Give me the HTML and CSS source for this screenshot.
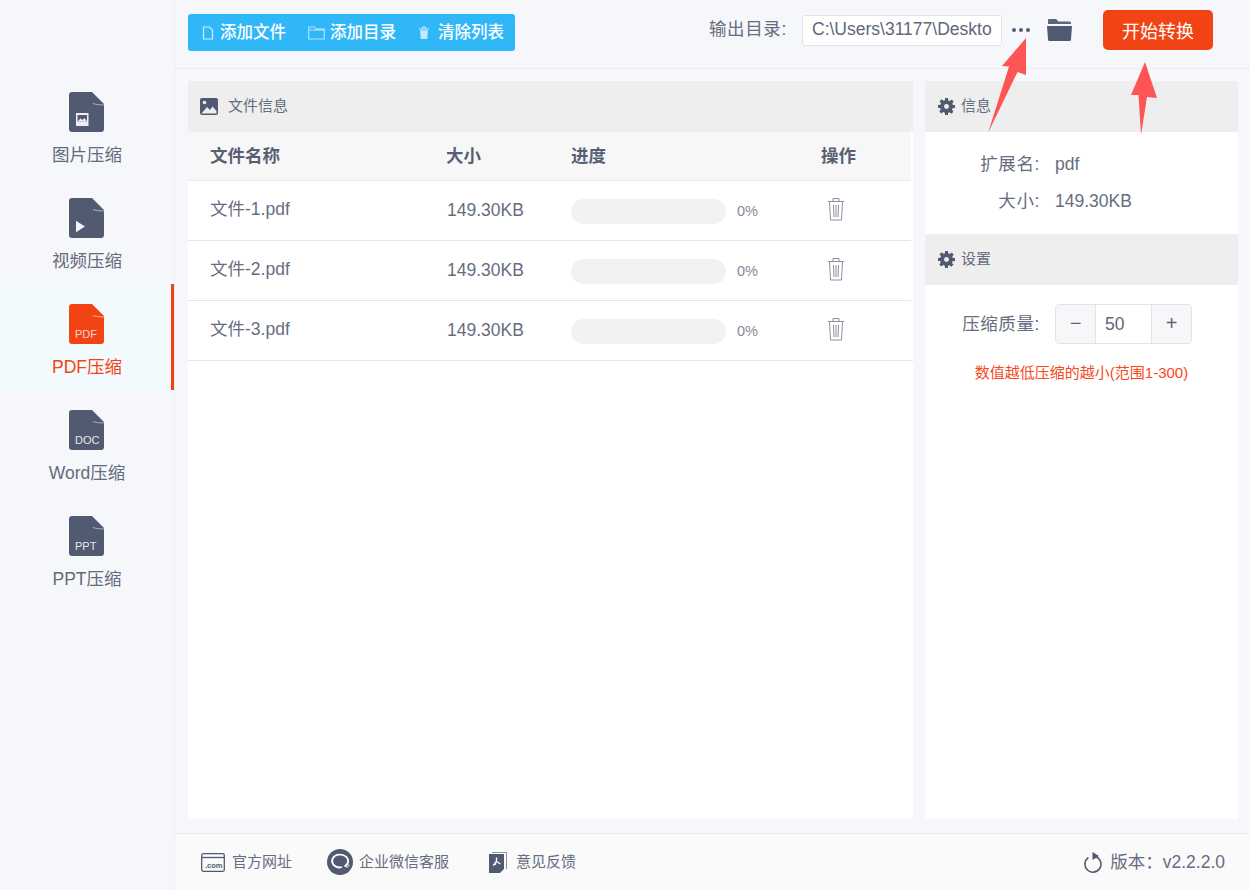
FILE: index.html
```html
<!DOCTYPE html>
<html lang="zh-CN">
<head>
<meta charset="utf-8">
<title>PDF压缩</title>
<link rel="stylesheet" href="styles.css">
</head>
<body>
<div class="app">
  <aside class="sidebar">
    <div class="nav-item">
      <svg class="file-icon" viewBox="0 0 35 40"><path class="f" d="M3 0H23L35 12V37a3 3 0 0 1-3 3H3a3 3 0 0 1-3-3V3a3 3 0 0 1 3-3Z"/><path class="fold" d="M24 11.500q3 1.500 11 1.500" /><rect x="7" y="21" width="12.500" height="13" fill="#eef0f4"/><rect x="8.500" y="23" width="9.500" height="6.500" fill="#525a72"/><path d="M8.500 29.500l3-3 2 1.500 2-2 2.500 3.500Z" fill="#eef0f4"/></svg>
      <span>图片压缩</span>
    </div>
    <div class="nav-item">
      <svg class="file-icon" viewBox="0 0 35 40"><path class="f" d="M3 0H23L35 12V37a3 3 0 0 1-3 3H3a3 3 0 0 1-3-3V3a3 3 0 0 1 3-3Z"/><path class="fold" d="M24 11.500q3 1.500 11 1.500"/><path d="M7 22.700l9 5.800-9 5.800Z" fill="#f3f5f8"/></svg>
      <span>视频压缩</span>
    </div>
    <div class="nav-item active">
      <svg class="file-icon" viewBox="0 0 35 40"><path class="f" d="M3 0H23L35 12V37a3 3 0 0 1-3 3H3a3 3 0 0 1-3-3V3a3 3 0 0 1 3-3Z"/><path class="fold" d="M24 11.500q3 1.500 11 1.500"/><text x="6" y="34" class="ft">PDF</text></svg>
      <span>PDF压缩</span>
    </div>
    <div class="nav-item">
      <svg class="file-icon" viewBox="0 0 35 40"><path class="f" d="M3 0H23L35 12V37a3 3 0 0 1-3 3H3a3 3 0 0 1-3-3V3a3 3 0 0 1 3-3Z"/><path class="fold" d="M24 11.500q3 1.500 11 1.500"/><text x="6" y="34" class="ft">DOC</text></svg>
      <span>Word压缩</span>
    </div>
    <div class="nav-item">
      <svg class="file-icon" viewBox="0 0 35 40"><path class="f" d="M3 0H23L35 12V37a3 3 0 0 1-3 3H3a3 3 0 0 1-3-3V3a3 3 0 0 1 3-3Z"/><path class="fold" d="M24 11.500q3 1.500 11 1.500"/><text x="6" y="34" class="ft">PPT</text></svg>
      <span>PPT压缩</span>
    </div>
  </aside>

  <div class="main">
    <header class="topbar">
      <div class="toolbar">
        <div class="tool">
          <svg class="tool-icon" viewBox="0 0 12 14"><path d="M1.500 1h6l3 3.200V13h-9Z" fill="none" stroke="#d6effd" stroke-width="1.200"/></svg>
          <span>添加文件</span>
        </div>
        <div class="tool">
          <svg class="tool-icon wide" viewBox="0 0 17 14"><path d="M.7 1h6l1.300 2h8.300v10H.7Z M.7 4h15.600" fill="none" stroke="#b9e5fc" stroke-width="1.100"/></svg>
          <span>添加目录</span>
        </div>
        <div class="tool">
          <svg class="tool-icon bin" viewBox="0 0 12 14"><path d="M1 3h10M4 2.500 4.500 1h3L8 2.500" fill="none" stroke="#c5e9fc" stroke-width="1.100"/><path d="M2 4.200h8L9.200 13H2.800Z" fill="#c5e9fc"/></svg>
          <span>清除列表</span>
        </div>
      </div>
      <div class="output">
        <span class="output-label">输出目录:</span>
        <div class="path-box">C:\Users\31177\Deskto</div>
        <div class="dots"><i></i><i></i><i></i></div>
        <svg class="folder" viewBox="0 0 25 22"><path d="M2 0H9l2.500 2.500H22.500a1.500 1.500 0 0 1 1.500 1.500v1H1V1a1 1 0 0 1 1-1Z" fill="#5f667c"/><path d="M0 7h25l-1 13.500A1.500 1.500 0 0 1 22.500 22h-20A1.500 1.500 0 0 1 1 20.500Z" fill="#525a72"/></svg>
        <button class="start">开始转换</button>
      </div>
    </header>

    <div class="content">
      <section class="files">
        <div class="panel-head">
          <svg class="head-img" viewBox="0 0 18 17"><rect width="18" height="17" rx="2" fill="#525a72"/><circle cx="4.500" cy="4.500" r="1.800" fill="#eee"/><path d="M1.500 15.500 7 9l3 3 2.500-3.500 4 4.500v2.500Z" fill="#eee"/></svg>
          <span>文件信息</span>
        </div>
        <div class="row thead">
          <div class="c-name">文件名称</div>
          <div class="c-size">大小</div>
          <div class="c-prog">进度</div>
          <div class="c-op">操作</div>
        </div>
        <div class="row">
          <div class="c-name">文件-1.pdf</div>
          <div class="c-size">149.30KB</div>
          <div class="c-prog"><div class="bar"></div><span class="pct">0%</span></div>
          <div class="c-op"><svg class="trash" viewBox="0 0 18 24"><path d="M1 4.500h16M6 4.500V1.500h6v3M2.500 4.500l1 18.500h11l1-18.500M6.500 8l.5 12M9 8v12M11.500 8 11 20" fill="none" stroke="#8b90a1" stroke-width="1"/></svg></div>
        </div>
        <div class="row">
          <div class="c-name">文件-2.pdf</div>
          <div class="c-size">149.30KB</div>
          <div class="c-prog"><div class="bar"></div><span class="pct">0%</span></div>
          <div class="c-op"><svg class="trash" viewBox="0 0 18 24"><path d="M1 4.500h16M6 4.500V1.500h6v3M2.500 4.500l1 18.500h11l1-18.500M6.500 8l.5 12M9 8v12M11.500 8 11 20" fill="none" stroke="#8b90a1" stroke-width="1"/></svg></div>
        </div>
        <div class="row">
          <div class="c-name">文件-3.pdf</div>
          <div class="c-size">149.30KB</div>
          <div class="c-prog"><div class="bar"></div><span class="pct">0%</span></div>
          <div class="c-op"><svg class="trash" viewBox="0 0 18 24"><path d="M1 4.500h16M6 4.500V1.500h6v3M2.500 4.500l1 18.500h11l1-18.500M6.500 8l.5 12M9 8v12M11.500 8 11 20" fill="none" stroke="#8b90a1" stroke-width="1"/></svg></div>
        </div>
      </section>

      <section class="side">
        <div class="panel-head">
          <svg class="gear" viewBox="0 0 24 24"><path d="M10 0h4l.6 3.400 2 .8 2.800-2 2.800 2.800-2 2.800.8 2L24 10v4l-3.400.6-.8 2 2 2.800-2.800 2.800-2.800-2-2 .8L14 24h-4l-.6-3.400-2-.8-2.800 2-2.800-2.800 2-2.800-.8-2L0 14v-4l3.400-.6.800-2-2-2.800L5 1.800l2.800 2 2-.8Z M12 8.500a3.500 3.500 0 1 0 0 7 3.500 3.500 0 0 0 0-7Z" fill="#525a72" fill-rule="evenodd"/></svg>
          <span>信息</span>
        </div>
        <div class="info">
          <div class="info-row"><label>扩展名:</label><span>pdf</span></div>
          <div class="info-row"><label>大小:</label><span>149.30KB</span></div>
        </div>
        <div class="panel-head">
          <svg class="gear" viewBox="0 0 24 24"><path d="M10 0h4l.6 3.400 2 .8 2.800-2 2.800 2.800-2 2.800.8 2L24 10v4l-3.400.6-.8 2 2 2.800-2.800 2.800-2.800-2-2 .8L14 24h-4l-.6-3.400-2-.8-2.800 2-2.800-2.800 2-2.800-.8-2L0 14v-4l3.400-.6.800-2-2-2.800L5 1.800l2.800 2 2-.8Z M12 8.500a3.500 3.500 0 1 0 0 7 3.500 3.500 0 0 0 0-7Z" fill="#525a72" fill-rule="evenodd"/></svg>
          <span>设置</span>
        </div>
        <div class="quality">
          <label>压缩质量:</label>
          <div class="stepper">
            <div class="step">−</div>
            <div class="val">50</div>
            <div class="step">+</div>
          </div>
        </div>
        <p class="hint">数值越低压缩的越小(范围1-300)</p>
      </section>
    </div>

    <footer class="footer">
      <div class="foot-link l-site">
        <svg class="fi-com" viewBox="0 0 24 19"><rect x=".7" y=".7" width="22.600" height="17.600" rx="1.500" fill="none" stroke="#525a72" stroke-width="1.300"/><path d="M.7 4.500h22.600" stroke="#525a72" stroke-width="1.300"/><text x="4" y="15" class="com">.com</text></svg>
        <span>官方网址</span>
      </div>
      <div class="foot-link l-wx">
        <svg class="fi-wx" viewBox="0 0 26 26"><circle cx="13" cy="13" r="13" fill="#525a72"/><path d="M17.500 17.500A8 6.500 0 1 0 12 18.500c1.200 0 2-.1 3-.5" fill="none" stroke="#fff" stroke-width="1.800"/><path d="M20 14.500l2 2-2 2-2-2Z" fill="none" stroke="#fff" stroke-width="1"/></svg>
        <span>企业微信客服</span>
      </div>
      <div class="foot-link l-fb">
        <svg class="fi-pdf" viewBox="0 0 18 22"><path d="M3 1h15v17h-1V2H3Z" fill="#8d93a4"/><path d="M0 3h15v15l-4 4H0Z" fill="#525a72"/><path d="M7.500 6.500c.5 3-1 6-3.500 8M7.500 10.500l4 2.500M7 11l-1 3" fill="none" stroke="#fff" stroke-width="1.300"/></svg>
        <span>意见反馈</span>
      </div>
      <div class="version">
        <svg class="fi-ver" viewBox="0 0 19 21"><path d="M5.300 5.700A8 8 0 1 0 13 4.800" fill="none" stroke="#525a72" stroke-width="1.600"/><path d="M9.500 0v8l6.500-4Z" fill="#525a72"/></svg>
        <span>版本：v2.2.2.0</span>
      </div>
    </footer>
  </div>

  <svg class="arrows" viewBox="0 0 1250 890">
    <path d="M1026 38 1002 66 1009 66.500 988 133 1017.500 72 1026 75Z" fill="#ff5455"/>
    <path d="M1145 62 1131 95 1138.500 95 1141 135 1147 97 1157 98Z" fill="#ff5455"/>
  </svg>
</div>
</body>
</html>
```

FILE: styles.css
```css
* { box-sizing: border-box; }
html, body { margin: 0; padding: 0; height: 100%; }
body {
  font-family: "Liberation Sans", "Noto Sans CJK SC", sans-serif;
  color: #5e6579;
  background: #f6f7fa;
  overflow: hidden;
}
.app { position: relative; display: flex; width: 1250px; height: 890px; }

.sidebar {
  width: 175px;
  flex: none;
  padding-top: 72px;
  background: #f6f7fa;
  border-right: 1px solid #eeeff3;
}
.nav-item {
  height: 106px;
  padding-top: 20px;
  display: flex;
  flex-direction: column;
  align-items: center;
  font-size: 17.500px;
  line-height: 26px;
  color: #636a7e;
}
.nav-item span { margin-top: 10px; }
.file-icon { width: 35px; height: 40px; display: block; margin-right: 1px; }
.file-icon .f { fill: #525a72; }
.file-icon .fold { fill: none; stroke: #a9aebc; stroke-width: 1; }
.file-icon .ft { font-size: 11px; fill: #e6e8ee; font-family: "Liberation Sans", sans-serif; }
.nav-item.active { background: #f3fafe; box-shadow: inset -3px 0 0 #f24314; color: #f24314; }
.nav-item.active .f { fill: #f24314; }
.nav-item.active .fold { stroke: #f9b09b; }
.nav-item.active .ft { fill: #fbd3c7; }

.main { flex: 1; display: flex; flex-direction: column; min-width: 0; }
.topbar {
  height: 69px;
  flex: none;
  display: flex;
  justify-content: space-between;
  border-bottom: 1px solid #eceef1;
  padding-left: 13px;
  padding-right: 37px;
}
.toolbar {
  margin-top: 14px;
  width: 327px;
  height: 37px;
  background: #2fb7f8;
  border-radius: 3px;
  display: flex;
  align-items: center;
  padding-left: 14px;
}
.tool {
  display: flex;
  align-items: center;
  color: #fff;
  font-size: 16.500px;
  line-height: 24px;
  font-weight: 500;
  margin-right: 22px;
  white-space: nowrap;
}
.tool span { margin-top: -2px; }
.tool-icon { width: 12px; height: 14px; margin-right: 6px; }
.tool-icon.wide { width: 17px; margin-right: 5px; }
.tool-icon.bin { margin-right: 8px; }
.tool:last-child { margin-right: 0; }

.output { display: flex; align-items: flex-start; }
.output-label { margin-top: 17px; font-size: 17.500px; letter-spacing: .6px; line-height: 24px; color: #666d80; width: 93px; white-space: nowrap; }
.path-box {
  margin-top: 15px;
  width: 200px;
  height: 31px;
  background: #fff;
  border: 1px solid #e1e3e9;
  border-radius: 3px;
  padding-left: 9px;
  font-size: 17.500px;
  line-height: 27px;
  color: #606779;
  white-space: nowrap;
  overflow: hidden;
}
.dots { margin-left: 10px; margin-top: 28px; display: flex; gap: 3px; width: 18px; }
.dots i { width: 4px; height: 4px; border-radius: 50%; background: #525a72; flex: none; }
.folder { width: 25px; height: 22px; margin-left: 17px; margin-top: 19px; flex: none; }
.start {
  margin-left: 31px;
  margin-top: 10px;
  width: 110px;
  height: 40px;
  background: #f24314;
  color: #fff;
  border: 0;
  border-radius: 5px;
  font-family: inherit;
  font-size: 18px;
  padding: 0;
}

.content {
  flex: 1;
  min-height: 0;
  display: flex;
  gap: 12px;
  padding: 12px 12px 14px 13px;
}
.files { width: 725px; background: #fff; }
.side { width: 313px; background: #fff; }
.panel-head {
  height: 51px;
  background: #eeeeee;
  display: flex;
  align-items: center;
  font-size: 15px;
  line-height: 20px;
  color: #666d80;
}
.panel-head span { margin-top: -2px; }
.files .panel-head span { margin-left: 10px; }
.head-img { width: 18px; height: 17px; margin-left: 12px; }
.gear { width: 17px; height: 17px; margin-left: 13px; margin-right: 6px; }

.row {
  height: 60px;
  display: flex;
  align-items: center;
  border-bottom: 1px solid #e4e5e8;
  margin-right: 2px;
  font-size: 17.500px;
  line-height: 24px;
  color: #666d80;
}
.row:last-child { margin-right: 0; }
.thead { height: 49px; background: #f7f7f8; font-weight: 700; color: #585f73; border-bottom-color: #e9eaec; }
.c-name { width: 258px; padding-left: 22px; margin-top: -3px; }
.c-size { width: 125px; padding-left: 1px; margin-top: -2px; white-space: nowrap; }
.thead .c-name, .thead .c-size { margin-top: 0; }
.thead .c-size { padding-left: 0; }
.c-prog { width: 250px; display: flex; align-items: center; }
.c-op { flex: 1; display: flex; }
.bar { width: 155px; height: 25px; margin-top: 1px; border-radius: 13px; background: #f2f2f3; }
.pct { margin-left: 11px; font-size: 14.500px; color: #85899a; }
.trash { width: 18px; height: 24px; margin-left: 6px; margin-top: -3px; }
.thead .c-prog { display: block; }

.info { height: 102px; padding-top: 13px; }
.info-row { display: flex; align-items: center; height: 37px; font-size: 17.500px; line-height: 24px; color: #666d80; }
.info-row label { width: 130px; text-align: right; padding-right: 15px; letter-spacing: .6px; }
.quality { display: flex; align-items: center; padding-top: 19px; font-size: 17.500px; line-height: 24px; color: #666d80; }
.quality label { width: 130px; padding-right: 15px; text-align: right; white-space: nowrap; letter-spacing: .6px; }
.stepper {
  display: flex;
  width: 137px;
  height: 40px;
  border: 1px solid #e1e3e9;
  border-radius: 4px;
  overflow: hidden;
}
.step { width: 39px; background: #f7f7f9; text-align: center; line-height: 37px; font-size: 20px; color: #5e6579; flex: none; }
.val { flex: 1; background: #fff; border-left: 1px solid #e1e3e9; border-right: 1px solid #e1e3e9; font-size: 17.500px; line-height: 38px; padding-left: 9px; color: #606779; }
.hint { margin: 19px 0 0; text-align: center; font-size: 15px; line-height: 20px; color: #f8481e; }

.footer {
  height: 57px;
  flex: none;
  background: #fafafb;
  border-top: 1px solid #eceef1;
  display: flex;
  align-items: center;
  padding-left: 26px;
  padding-right: 25px;
}
.foot-link { display: flex; align-items: center; font-size: 15px; line-height: 20px; color: #666d80; white-space: nowrap; }
.foot-link span { margin-top: -1px; }
.l-site { margin-right: 35px; }
.l-site span { margin-left: 7px; }
.l-wx { margin-right: 40px; }
.l-wx span { margin-left: 6px; }
.l-fb span { margin-left: 9px; }
.fi-com { width: 24px; height: 19px; }
.com { font-size: 7.500px; fill: #525a72; font-weight: 700; font-family: "Liberation Sans", sans-serif; }
.fi-wx { width: 26px; height: 26px; }
.fi-pdf { width: 18px; height: 22px; }
.version { margin-left: auto; display: flex; align-items: center; font-size: 17.500px; line-height: 24px; color: #666d80; white-space: nowrap; }
.fi-ver { width: 19px; height: 21px; margin-right: 8px; }

.arrows { position: absolute; left: 0; top: 0; width: 1250px; height: 890px; pointer-events: none; }
```
